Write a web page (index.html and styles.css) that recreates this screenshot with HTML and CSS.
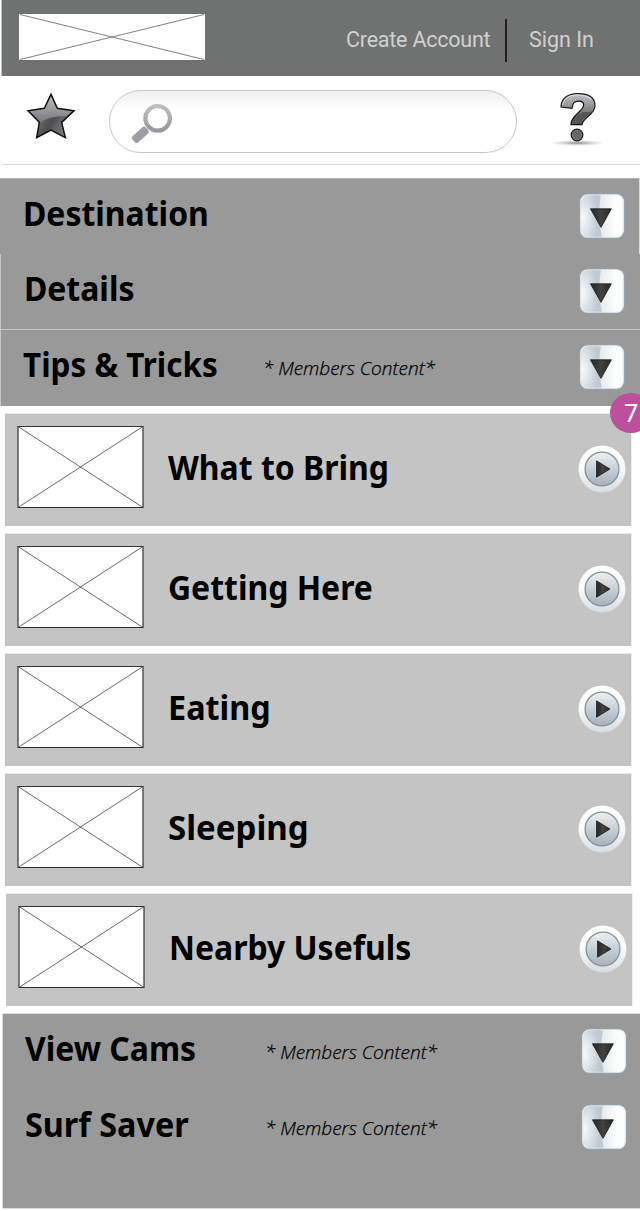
FILE: index.html
```html
<!DOCTYPE html>
<html lang="en">
<head>
<meta charset="utf-8">
<title>Destination guide</title>
<link rel="stylesheet" href="styles.css">
</head>
<body>
<svg class="defs" width="0" height="0" aria-hidden="true">
  <defs>
    <linearGradient id="metal" x1="0" y1="0" x2="0" y2="1"><stop offset="0" stop-color="#c2c3c5"/><stop offset=".55" stop-color="#808284"/><stop offset="1" stop-color="#626365"/></linearGradient>
    <linearGradient id="dark" x1="0" y1="0" x2="1" y2=".4"><stop offset="0" stop-color="#777"/><stop offset=".5" stop-color="#4d4d4f"/><stop offset="1" stop-color="#77787a"/></linearGradient>
    <linearGradient id="lens" x1="0" y1="0" x2="0" y2="1"><stop offset="0" stop-color="#bebfc1"/><stop offset="1" stop-color="#96989b"/></linearGradient>
    <radialGradient id="shade"><stop offset="0" stop-color="#8a8c8e"/><stop offset=".5" stop-color="#d2d3d5"/><stop offset="1" stop-color="#fff"/></radialGradient>
    <radialGradient id="left" cx=".08" cy=".55" r=".75"><stop offset="0" stop-color="#f9fbfc"/><stop offset=".5" stop-color="#dde3e8"/><stop offset="1" stop-color="#c0cad2"/></radialGradient>
    <linearGradient id="right" x1="0" y1="0" x2="1" y2="0"><stop offset="0" stop-color="#dde3e9"/><stop offset=".45" stop-color="#e6eaee"/><stop offset=".8" stop-color="#fcfdfd"/></linearGradient>
    <linearGradient id="arrow" x1="0" y1="0" x2="1" y2="0"><stop offset="0" stop-color="#262626"/><stop offset=".5" stop-color="#424242"/><stop offset="1" stop-color="#262626"/></linearGradient>
    <linearGradient id="ring" x1="0" y1="0" x2="0" y2="1"><stop offset="0" stop-color="#fff"/><stop offset=".5" stop-color="#f8f9f9"/><stop offset="1" stop-color="#d8dcdf"/></linearGradient>
    <linearGradient id="disc" x1="0" y1="0" x2="0" y2="1"><stop offset="0" stop-color="#edf1f3"/><stop offset=".5" stop-color="#c6d0d6"/><stop offset="1" stop-color="#a2b2bb"/></linearGradient>
    <symbol id="expand" viewBox="0 0 46 46">
      <rect x=".7" y=".7" width="44.6" height="44.6" rx="8" fill="url(#right)"/>
      <path d="M22 1H9Q1 1 1 9v28q0 8 8 8h14Q18 23 22 1z" fill="url(#left)"/>
      <rect x="1.8" y="1.8" width="42.4" height="42.4" rx="7" fill="none" stroke="#e8edf0"/>
      <rect x=".6" y=".6" width="44.8" height="44.8" rx="8" fill="none" stroke="#91a1ad" stroke-width="1.1"/>
      <path d="M11.4 15.8h21L22 34.4z" fill="url(#arrow)" stroke="#152525" stroke-width=".8"/>
    </symbol>
    <symbol id="play" viewBox="0 0 48 48">
      <circle cx="24" cy="24" r="23.5" fill="url(#ring)"/>
      <circle cx="24" cy="24" r="16.9" fill="url(#disc)" stroke="#82949f" stroke-width="1.3"/>
      <path d="M18.5 15.8v16.4L32 24z" fill="url(#arrow)" stroke="#222" stroke-width=".8"/>
    </symbol>
    <symbol id="thumb" viewBox="0 0 127 83">
      <path d="M1 .5h125v81H1z" fill="#fff" stroke="#333" stroke-width="1.2"/>
      <path d="M1 .5l125 81M126 .5L1 81.5" stroke="#444" stroke-width=".8"/>
    </symbol>
  </defs>
</svg>

<header class="topbar">
  <svg class="logo" viewBox="0 0 186 46"><path fill="#fff" d="M0 0h186v46H0z"/><path d="M1 .5l184 45M185 .5L1 45.5" stroke="#707271" stroke-width=".9"/></svg>
  <nav class="account">
    <a class="create">Create Account</a>
    <a class="signin">Sign In</a>
  </nav>
</header>

<div class="tools">
  <svg class="star" viewBox="78 276 150 144">
    <path d="M153 283l19 42 50 7-37 35 11 46-43-23-43 23 8-46-34-35 49-7z" fill="url(#metal)"/>
    <path d="M121 368q26-21 81-20l-17 19 11 46-43-23-43 23z" fill="url(#dark)"/>
    <path d="M153 283l19 42 50 7-37 35 11 46-43-23-43 23 8-46-34-35 49-7z" fill="none" stroke="#111" stroke-width="4.5"/>
  </svg>
  <div class="search">
    <svg class="glass" viewBox="390 300 132 126"><circle cx="473" cy="349" r="37" fill="none" stroke="url(#lens)" stroke-width="12.5"/><rect x="394" y="386" width="54" height="25" rx="7" fill="#9c9ea1" transform="rotate(-42 421 398.500)"/></svg>
  </div>
  <svg class="help" viewBox="688 273 168 168">
    <ellipse cx="770" cy="429" rx="80" ry="9" fill="url(#shade)"/>
    <path d="M721 321C722 295 742 281 771 281C804 281 823 293 823 317C823 344 787 351 784 374H751C750 346 789 334 789 315C789 300 762 300 757 313Q755 320 754 325Z" fill="url(#metal)" stroke="#151515" stroke-width="3.500"/>
    <path d="M754 372C755 352 775 343 788 335Q802 337 814 334C802 347 785 355 782 372Z" fill="#555658"/>
    <path d="M726 315C731 292 747 285 772 285Q798 285 812 297" fill="none" stroke="#dfe0e1" stroke-width="3"/>
    <circle cx="769" cy="405" r="17.500" fill="#66686a" stroke="#151515" stroke-width="3.500"/>
    <circle cx="769" cy="405" r="14" fill="none" stroke="#858789" stroke-width="1.500"/>
  </svg>
</div>

<main>
  <section class="group upper">
    <div class="row first"><h2 class="title">Destination</h2><svg class="expand"><use href="#expand"/></svg></div>
    <div class="row second"><h2 class="title">Details</h2><svg class="expand"><use href="#expand"/></svg></div>
    <div class="row third"><h2 class="title tight">Tips &amp; Tricks</h2><em class="note">* Members Content*</em><svg class="expand"><use href="#expand"/></svg></div>
  </section>
  <section class="cards">
    <span class="badge">7</span>
    <article class="card"><svg class="thumb"><use href="#thumb"/></svg><h3 class="title">What to Bring</h3><svg class="play"><use href="#play"/></svg></article>
    <article class="card"><svg class="thumb"><use href="#thumb"/></svg><h3 class="title">Getting Here</h3><svg class="play"><use href="#play"/></svg></article>
    <article class="card"><svg class="thumb"><use href="#thumb"/></svg><h3 class="title loose">Eating</h3><svg class="play"><use href="#play"/></svg></article>
    <article class="card"><svg class="thumb"><use href="#thumb"/></svg><h3 class="title wide">Sleeping</h3><svg class="play"><use href="#play"/></svg></article>
    <article class="card last"><svg class="thumb"><use href="#thumb"/></svg><h3 class="title">Nearby Usefuls</h3><svg class="play"><use href="#play"/></svg></article>
  </section>
  <section class="group lower">
    <div class="row"><h2 class="title">View Cams</h2><em class="note">* Members Content*</em><svg class="expand"><use href="#expand"/></svg></div>
    <div class="row"><h2 class="title loose">Surf Saver</h2><em class="note">* Members Content*</em><svg class="expand"><use href="#expand"/></svg></div>
  </section>
</main>
</body>
</html>
```
FILE: styles.css
```css
* { box-sizing: border-box; }
body { margin: 0; width: 640px; height: 1211px; overflow: hidden; background: #fff; color: #000; font-family: "Noto Sans", sans-serif; }
svg { display: block; flex: none; }
.defs { position: absolute; }

.topbar { display: flex; justify-content: space-between; height: 76px; margin-left: 1px; padding: 14px 46px 0 17px; border-left: 1px solid #c5c6c6; background: #707271; }
.logo { width: 186px; height: 46px; }
.account { display: flex; height: 43px; margin-top: 5px; font: 21.5px/42px Roboto, sans-serif; color: #cfd0cf; white-space: nowrap; }
.create { width: 161px; border-right: 2px solid #231f20; letter-spacing: -.22px; }
.signin { width: 65px; margin-left: 22px; }

.tools { display: flex; height: 89px; margin-left: 2px; border-bottom: 1px solid #ddd; }
.star { width: 50px; height: 48px; margin: 16px 0 0 24px; }
.search { width: 408px; height: 63px; margin: 14px 0 0 33px; padding: 11px 0 0 20px; border: 1px solid #c5c6c8; border-radius: 32px; background: linear-gradient(#edeff0, #fff 32%); }
.glass { width: 44px; height: 42px; }
.help { width: 56px; height: 56px; margin: 15px 0 0 32.5px; }

.group { background: #999; }
.upper { height: 228px; margin-top: 13px; }
.row { display: grid; grid-template-columns: 240px 316px 46px; height: 76px; padding-left: 23px; }
.title { margin: 0; font-size: 34px; font-weight: 700; line-height: 68px; white-space: nowrap; transform: scaleX(.939); transform-origin: 0 0; }
.tight { transform: scaleX(.925); }
.loose { transform: scaleX(.952); }
.wide { transform: scaleX(.972); }
.note { font-family: "Open Sans", "Noto Sans", sans-serif; font-size: 19px; font-weight: 300; line-height: 76px; white-space: nowrap; -webkit-text-stroke: .25px #000; }
.expand { grid-column: 3; width: 46px; height: 46px; margin-top: 14px; }
.first { border-top: 1px solid #b2b2b2; border-right: 1px solid #ddd; }
.second { border-bottom: 1px solid #c8c8c8; border-left: 1px solid #c5c5c5; padding-left: 22px; }
.second .title { text-indent: 1px; }
.third { border-left: 1px solid #c5c5c5; padding-left: 22px; }

.cards { position: relative; display: grid; gap: 7px; padding: 7px 0 8px 5px; }
.card { display: grid; grid-template-columns: 163px 410px 48px; width: 627px; height: 113px; padding-left: 12px; border-top: 1px solid #eaeaea; border-right: 1px solid #eee; background: #c4c4c4; }
.card.last { margin-left: 1px; }
.card .title { width: 0; margin-left: -12px; line-height: 106px; }
.thumb { width: 127px; height: 83px; margin-top: 12px; }
.play { width: 48px; height: 48px; margin: 31px 0 0 -12px; }
.badge { position: absolute; top: -13px; left: 610px; z-index: 1; width: 42px; height: 40px; padding-left: 14px; border-radius: 50%; background: #bd4f9d; color: #fff; font-size: 25px; line-height: 38px; }

.lower { height: 196px; margin: -1px 0 0 2px; border: solid #ddd; border-width: 1px 0 1px 1px; }
.lower .row { padding-left: 22px; }
```
